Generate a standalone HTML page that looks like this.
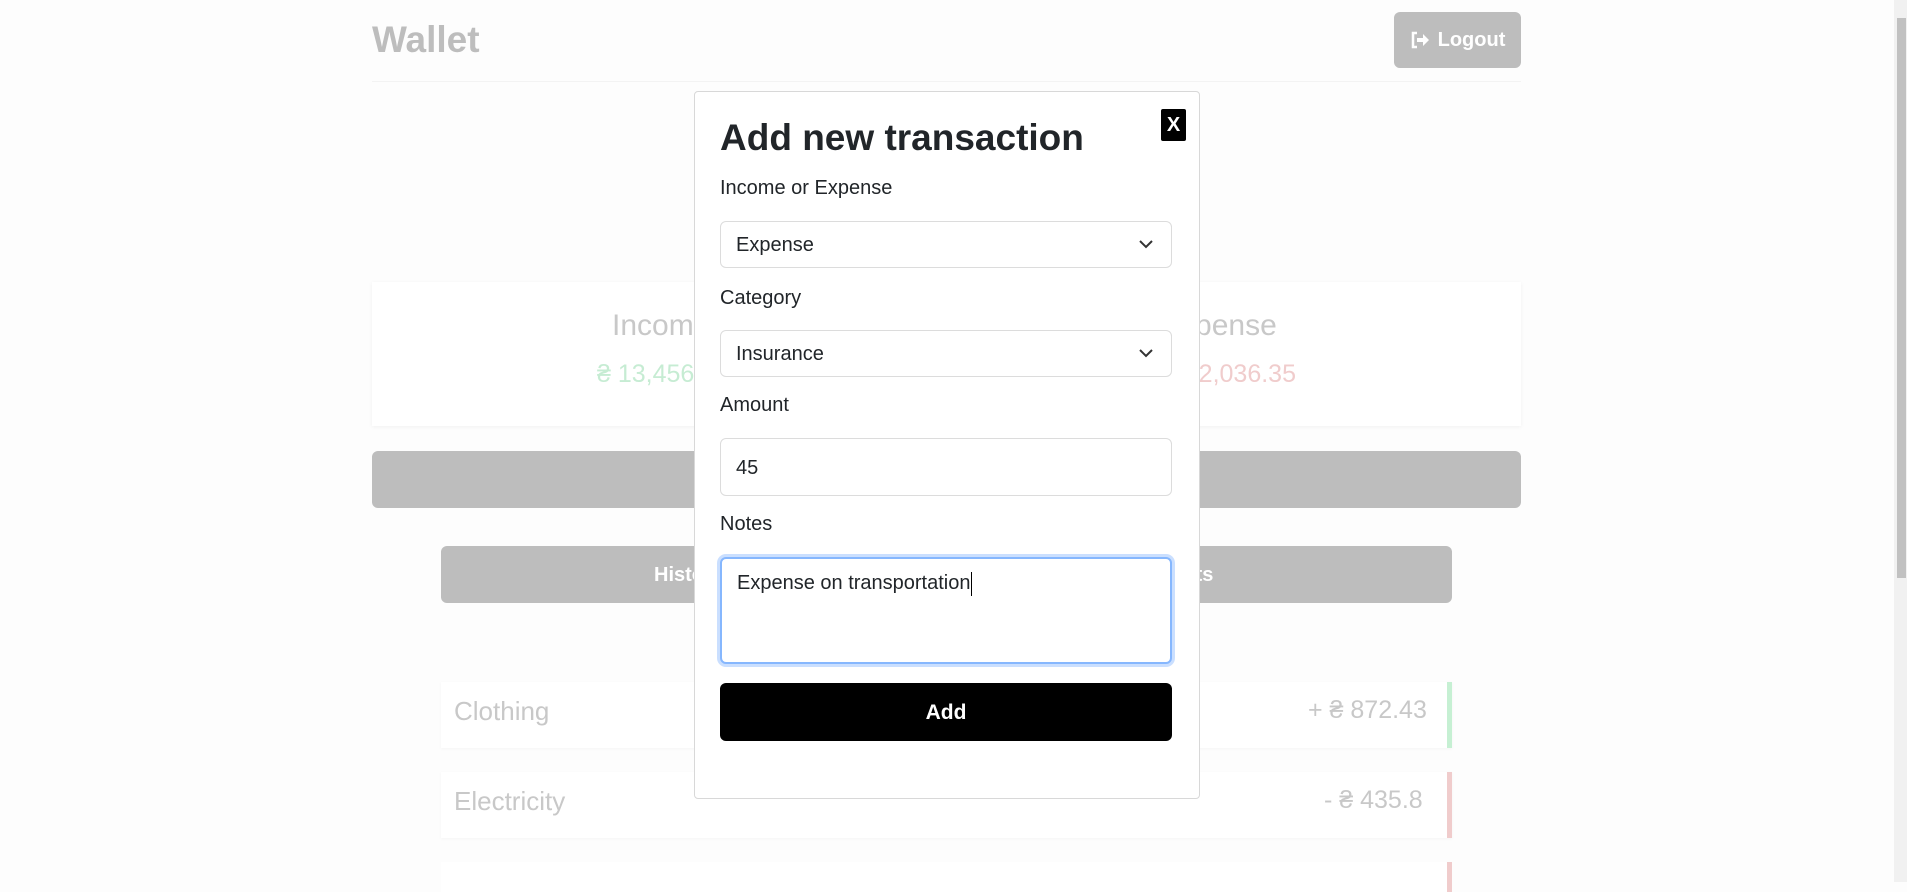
<!DOCTYPE html>
<html><head><style>
*{box-sizing:border-box;margin:0;padding:0}
body{width:1907px;height:882px;overflow:hidden;background:#fdfdfd;font-family:"Liberation Sans",sans-serif;position:relative}
.a{position:absolute}
.lbl{position:absolute;left:720px;font-size:20px;color:#212529}
.fld{position:absolute;left:720px;width:452px;border:1px solid #dcdcdc;border-radius:6px;background:#fff;font-size:20px;color:#212529;padding-left:15px;display:flex;align-items:center}
</style></head><body>
<div class="a" style="left:372px;top:19px;font-size:37px;font-weight:bold;color:#bdbdbd">Wallet</div>
<div class="a" style="left:1394px;top:12px;width:127px;height:56px;background:#bdbdbd;border-radius:6px;color:#fff;font-weight:bold;font-size:20px;display:flex;align-items:center;justify-content:center">
<svg width="20" height="18" viewBox="0 0 20 18" style="margin-right:8px"><path d="M7 2H3v14h4" fill="none" stroke="#fff" stroke-width="2.5"/><path d="M7 7h6V3l6 6-6 6v-4H7z" fill="#fff"/></svg>Logout</div>
<div class="a" style="left:372px;top:81px;width:1149px;height:1px;background:#f3f3f3"></div>
<div class="a" style="left:372px;top:282px;width:1149px;height:144px;background:#fff;box-shadow:0 1px 4px rgba(0,0,0,.05)"></div>
<div class="a" style="left:612px;top:309px;font-size:30px;color:#c8c8c8">Income</div>
<div class="a" style="left:597px;top:360px;font-size:25px;color:#c6ecd3">₴ 13,456.00</div>
<div class="a" style="left:1160px;top:309px;font-size:30px;color:#c8c8c8">Expense</div>
<div class="a" style="right:611px;top:360px;font-size:25px;color:#f0cccc">₴ 2,036.35</div>
<div class="a" style="left:372px;top:451px;width:1149px;height:57px;background:#bdbdbd;border-radius:6px"></div>
<div class="a" style="left:441px;top:546px;width:1011px;height:57px;background:#bdbdbd;border-radius:6px"></div>
<div class="a" style="left:654px;top:564px;font-size:20px;font-weight:bold;color:#fff">History</div>
<div class="a" style="left:1150px;top:564px;font-size:20px;font-weight:bold;color:#fff">Charts</div>
<div class="a" style="left:441px;top:682px;width:1011px;height:66px;background:#fff;border-right:5px solid #c6f0d3;box-shadow:0 1px 3px rgba(0,0,0,.04)"></div>
<div class="a" style="left:454px;top:696px;font-size:26px;color:#c8c8c8">Clothing</div>
<div class="a" style="left:1308px;top:696px;font-size:25px;color:#c8c8c8">+ ₴ 872.43</div>
<div class="a" style="left:441px;top:772px;width:1011px;height:66px;background:#fff;border-right:5px solid #f0cccc;box-shadow:0 1px 3px rgba(0,0,0,.04)"></div>
<div class="a" style="left:454px;top:786px;font-size:26px;color:#c8c8c8">Electricity</div>
<div class="a" style="left:1324px;top:786px;font-size:25px;color:#c8c8c8">- ₴ 435.8</div>
<div class="a" style="left:441px;top:862px;width:1011px;height:30px;background:#fff;border-right:5px solid #f0cccc"></div>
<div class="a" style="left:1894px;top:0;width:13px;height:882px;background:#f1f1f1"></div>
<div class="a" style="left:1897px;top:18px;width:9px;height:560px;background:#c1c1c1"></div>

<div class="a" style="left:694px;top:91px;width:506px;height:708px;background:#fff;border:1px solid #d8d8d8;border-radius:4px"></div>
<div class="a" style="left:1161px;top:109px;width:25px;height:32px;background:#000;border-radius:2px;color:#fff;font-size:20px;font-weight:bold;display:flex;align-items:center;justify-content:center">X</div>
<div class="a" style="left:720px;top:117px;font-size:37px;font-weight:bold;color:#212529">Add new transaction</div>
<div class="lbl" style="top:177px">Income or Expense</div>
<div class="fld" style="top:221px;height:47px;padding-top:2px">Expense<svg class="a" style="right:18px;top:18px" width="14" height="9" viewBox="0 0 14 9"><path d="M1 1l6 6 6-6" fill="none" stroke="#333" stroke-width="2"/></svg></div>
<div class="lbl" style="top:287px">Category</div>
<div class="fld" style="top:330px;height:47px;padding-top:2px">Insurance<svg class="a" style="right:18px;top:18px" width="14" height="9" viewBox="0 0 14 9"><path d="M1 1l6 6 6-6" fill="none" stroke="#333" stroke-width="2"/></svg></div>
<div class="lbl" style="top:394px">Amount</div>
<div class="fld" style="top:438px;height:58px;padding-top:2px">45</div>
<div class="lbl" style="top:513px">Notes</div>
<div class="fld" style="top:557px;height:107px;align-items:flex-start;padding-top:13px;border:2px solid #86b7fe;box-shadow:0 0 0 3px rgba(13,110,253,.22)">Expense on transportation<span style="display:inline-block;width:1px;height:24px;background:#000"></span></div>
<div class="a" style="left:720px;top:683px;width:452px;height:58px;background:#000;border-radius:6px;color:#fff;font-weight:bold;font-size:21px;display:flex;align-items:center;justify-content:center;padding-top:2px">Add</div>
</body></html>
